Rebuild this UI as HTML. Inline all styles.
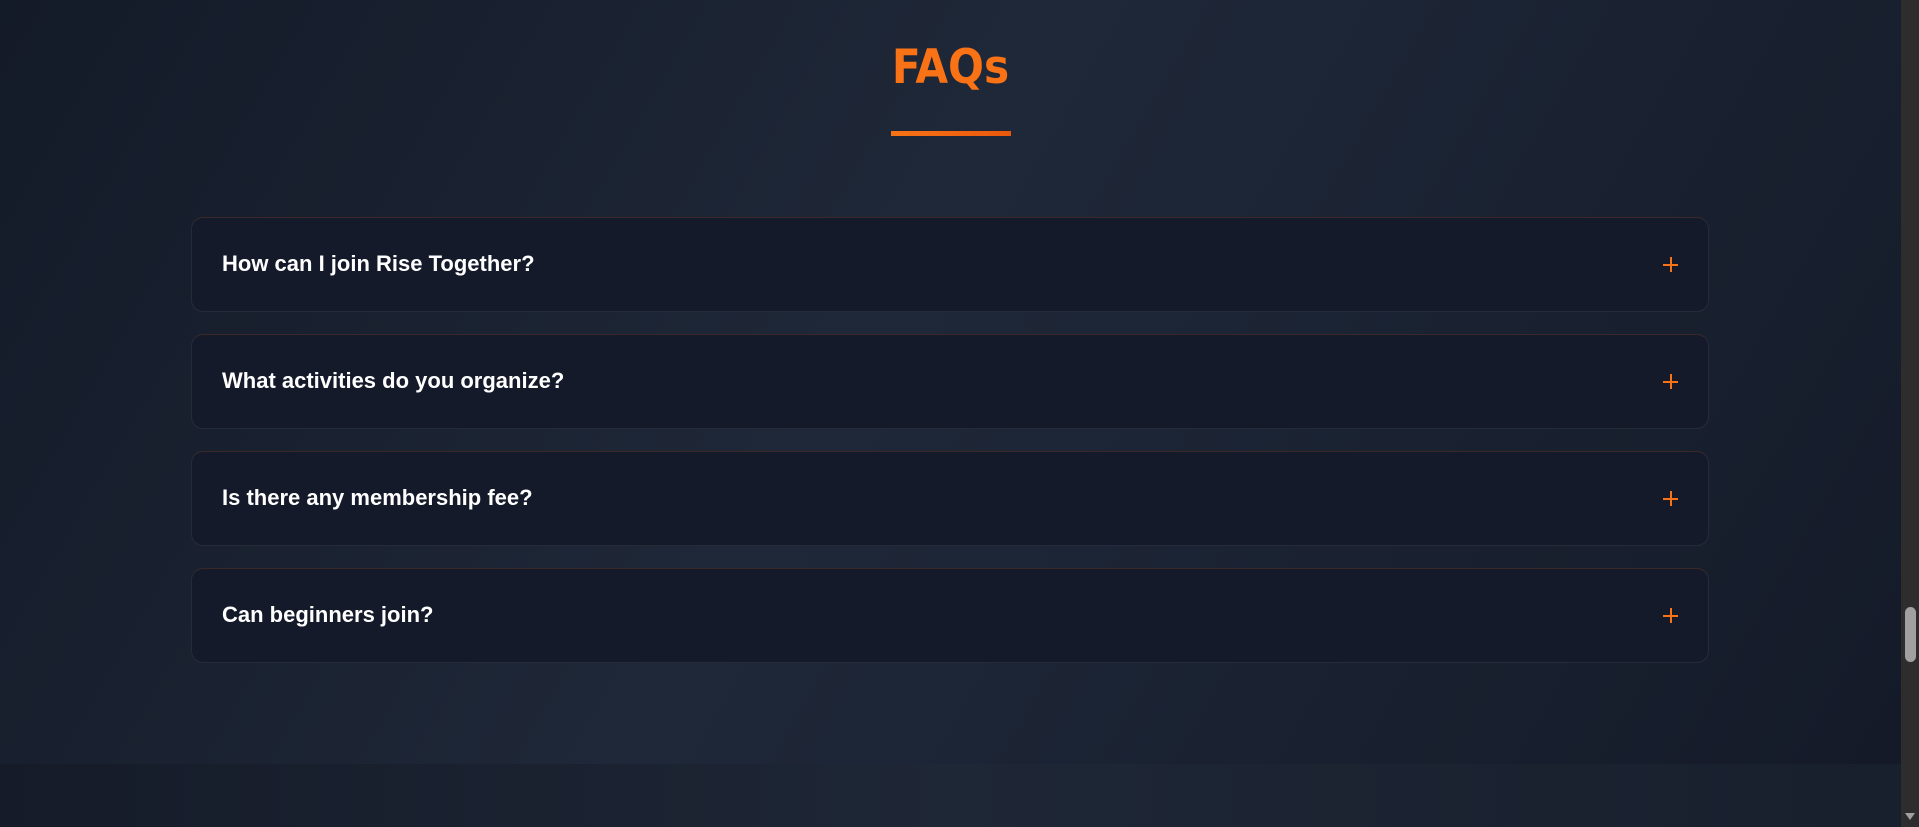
<!DOCTYPE html>
<html><head><meta charset="utf-8"><style>
html,body{margin:0;padding:0;}
body{width:1919px;height:827px;overflow:hidden;position:relative;font-family:"Liberation Sans",sans-serif;background:#1a2130;}
.sec{position:absolute;left:0;top:0;width:1901px;height:764px;background:linear-gradient(120deg,#131a28 0%,#1f2838 45%,#1c2535 60%,#141a28 100%);}
.foot{position:absolute;left:0;top:764px;width:1901px;height:63px;background:linear-gradient(90deg,#151b29,#1e2736 50%,#181f2d);}
h2{position:absolute;left:0;width:1901px;top:40px;margin:0;text-align:center;font-family:"DejaVu Sans Condensed","Liberation Sans Narrow",sans-serif;font-stretch:condensed;font-weight:bold;font-size:47px;color:#f97316;letter-spacing:0px;}
.ul{position:absolute;left:891px;top:131px;width:120px;height:5px;background:linear-gradient(90deg,#f97316,#ea580c);}
.card{position:absolute;left:191px;width:1518px;height:95px;border:1px solid rgba(255,255,255,0.08);border-top-color:rgba(200,90,40,0.22);border-radius:12px;background:#141a2a;box-sizing:border-box;}
.card span{position:absolute;left:30px;top:0px;line-height:92px;color:#fff;font-weight:bold;font-size:22px;}
.card i{position:absolute;right:30px;top:39px;width:15px;height:15px;}
.card i:before{content:"";position:absolute;left:0;top:6.5px;width:15px;height:2.5px;background:#f97316;}
.card i:after{content:"";position:absolute;left:6.5px;top:0;width:2.5px;height:15px;background:#f97316;}
.sb{position:absolute;left:1901px;top:0;width:18px;height:827px;background:#2d2d2d;}
.th{position:absolute;left:4px;top:607px;width:11px;height:55px;border-radius:6px;background:#a0a0a0;}
.ar{position:absolute;left:4px;top:813px;width:0;height:0;border-left:5px solid transparent;border-right:5px solid transparent;border-top:7px solid #a0a0a0;}
</style></head><body>
<div class="sec"></div><div class="foot"></div>
<h2>FAQs</h2><div class="ul"></div>
<div class="card" style="top:217px"><span>How can I join Rise Together?</span><i></i></div>
<div class="card" style="top:334px"><span>What activities do you organize?</span><i></i></div>
<div class="card" style="top:451px"><span>Is there any membership fee?</span><i></i></div>
<div class="card" style="top:568px"><span>Can beginners join?</span><i></i></div>
<div class="sb"><div class="th"></div><div class="ar"></div></div>
</body></html>
